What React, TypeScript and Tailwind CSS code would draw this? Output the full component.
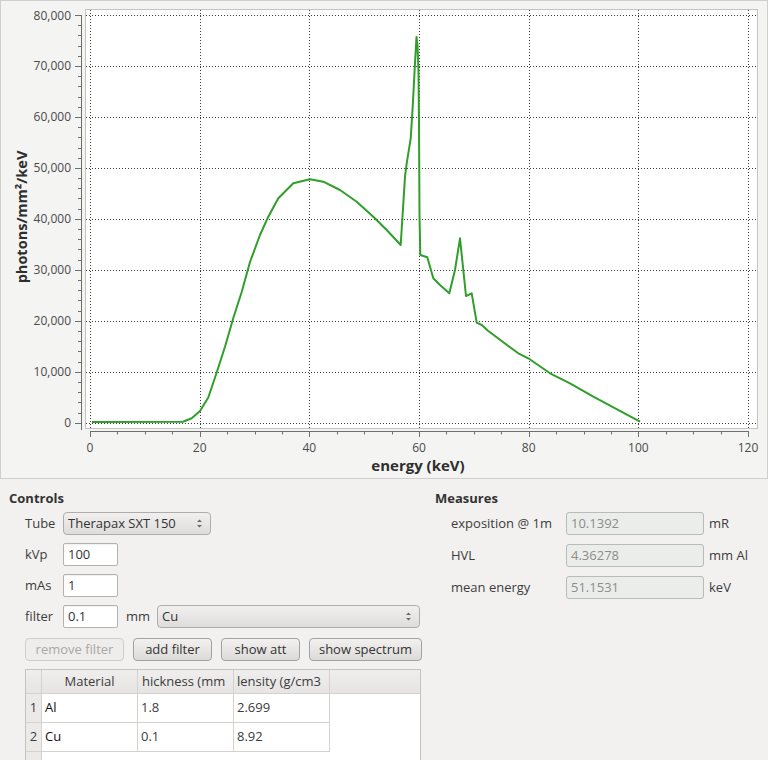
import React from "react";

const font = { fontFamily: '"Open Sans", "Noto Sans", sans-serif' };

const X0 = 90;
const XS = (748 - 90) / 120;
const Y0 = 422.7;
const YS = (422.7 - 15) / 80000;
const xp = (e: number) => X0 + e * XS;
const yp = (v: number) => Y0 - v * YS;

const curve: [number, number][] = [
  [92, 422], [183, 421.7], [191.7, 418.3], [200, 411], [208.3, 397.5], [216.7, 372.5], [225, 346.7],
  [233.3, 318], [241.7, 292], [250, 262], [260, 235], [268.3, 216.7], [278.3, 198.3], [293.3, 183.3],
  [310, 179.3], [323.3, 181.7], [340, 190], [356.7, 201.7], [373.3, 216.7], [386.7, 230], [400.7, 245],
  [405, 176.7], [406.7, 163.3], [410.7, 138.3], [412.7, 106.7], [414, 82], [415, 63.3], [416.5, 37],
  [417.5, 45], [418.5, 72], [419, 125], [419.5, 215], [420.3, 255], [427.3, 257.3], [433.3, 278.3],
  [440, 285], [449.3, 293.3], [455, 270], [460, 238.3], [466, 296], [471.7, 293.3], [476.7, 322.7],
  [481.7, 325], [488.3, 331], [518.3, 353.3], [528.3, 358.3], [550, 373.3], [570, 383.3], [593.3, 396.7],
  [640, 421.7],
];

function Chart() {
  const yMajor = [0, 10000, 20000, 30000, 40000, 50000, 60000, 70000, 80000];
  const yMinor: number[] = [];
  for (let v = 0; v <= 80000; v += 2000) if (v % 10000 !== 0) yMinor.push(v);
  const xMajor = [0, 20, 40, 60, 80, 100, 120];
  const xMinor: number[] = [];
  for (let e = 0; e <= 120; e += 5) if (e % 20 !== 0) xMinor.push(e);
  const r = (n: number) => Math.round(n) + 0.5;
  return (
    <svg width={766} height={477} viewBox="1 1 766 477" className="block" style={font}>
      <rect x={85.5} y={9.5} width={672} height={419} fill="#ffffff" stroke="#c4c4c4" />
      {yMajor.map((v) => (
        <line key={"gy" + v} x1={86} x2={757} y1={r(yp(v))} y2={r(yp(v))} stroke="#3a3a3a" strokeDasharray="1 2" />
      ))}
      {xMajor.map((e) => (
        <line key={"gx" + e} x1={r(xp(e))} x2={r(xp(e))} y1={10} y2={428} stroke="#3a3a3a" strokeDasharray="1 2" />
      ))}
      {/* y axis */}
      <line x1={81.5} x2={81.5} y1={15} y2={430} stroke="#6e6e6e" />
      {yMajor.map((v) => (
        <line key={"ty" + v} x1={75} x2={81} y1={r(yp(v))} y2={r(yp(v))} stroke="#6e6e6e" />
      ))}
      {yMinor.map((v) => (
        <line key={"my" + v} x1={78} x2={81} y1={r(yp(v))} y2={r(yp(v))} stroke="#6e6e6e" />
      ))}
      {yMajor.map((v) => (
        <text key={"ly" + v} x={71} y={yp(v) + 4.5} textAnchor="end" fontSize={12} fill="#4a4a4a">
          {v.toLocaleString("en-US")}
        </text>
      ))}
      {/* x axis */}
      <line x1={90} x2={748.5} y1={431.5} y2={431.5} stroke="#6e6e6e" />
      {xMajor.map((e) => (
        <line key={"tx" + e} x1={r(xp(e))} x2={r(xp(e))} y1={431} y2={437} stroke="#6e6e6e" />
      ))}
      {xMinor.map((e) => (
        <line key={"mx" + e} x1={r(xp(e))} x2={r(xp(e))} y1={431} y2={434.5} stroke="#6e6e6e" />
      ))}
      {xMajor.map((e) => (
        <text key={"lx" + e} x={xp(e)} y={451.5} textAnchor="middle" fontSize={12} fill="#4a4a4a">
          {e}
        </text>
      ))}
      <text x={418} y={471} textAnchor="middle" fontSize={15} fontWeight={700} fill="#2e2e2e">
        energy (keV)
      </text>
      <text
        x={0}
        y={0}
        transform="translate(26.5 217) rotate(-90)"
        textAnchor="middle"
        fontSize={14.5}
        fontWeight={700}
        fill="#2e2e2e"
      >
        photons/mm²/keV
      </text>
      <polyline
        points={curve.map(([a, b]) => `${a},${b}`).join(" ")}
        fill="none"
        stroke="#2f9f2a"
        strokeWidth={2}
        strokeLinejoin="round"
      />
    </svg>
  );
}

function Arrows() {
  return (
    <svg width="7" height="11" viewBox="0 0 7 11" className="shrink-0">
      <path d="M1 4 L3.5 1.5 L6 4 Z" fill="#6a6a6a" />
      <path d="M1 7 L3.5 9.5 L6 7 Z" fill="#6a6a6a" />
    </svg>
  );
}

function Combo({ text, w }: { text: string; w: string }) {
  return (
    <div
      className={`${w} h-[23px] flex items-center justify-between pl-[4px] pr-[7px] rounded-[4px] border border-[#aeadab] bg-gradient-to-b from-[#f1f0ef] to-[#dedddb] text-[13px] text-[#333]`}
    >
      <span>{text}</span>
      <Arrows />
    </div>
  );
}

function Input({ text }: { text: string }) {
  return (
    <div className="w-[55px] h-[23px] flex items-center pl-[4px] rounded-[2px] border border-[#b3b2b0] bg-white text-[13px] text-[#333] shadow-[inset_0_1px_1px_rgba(0,0,0,0.06)]">
      {text}
    </div>
  );
}

function Button({ text, w, disabled }: { text: string; w: string; disabled?: boolean }) {
  return (
    <div
      className={
        disabled
          ? `${w} h-[23px] flex items-center justify-center rounded-[4px] border border-[#cfcecc] bg-[#eeedec] text-[13px] text-[#a9a8a6]`
          : `${w} h-[23px] flex items-center justify-center rounded-[4px] border border-[#a3a2a0] bg-gradient-to-b from-[#f2f1f0] to-[#dcdbd9] text-[13px] text-[#333]`
      }
    >
      {text}
    </div>
  );
}

function Measure({ label, value, unit }: { label: string; value: string; unit: string }) {
  return (
    <div className="flex items-center h-[23px]">
      <div className="w-[115px] text-[13px] text-[#3c3c3c]">{label}</div>
      <div className="w-[138px] h-[23px] flex items-center pl-[4px] rounded-[3px] border border-[#b9bbb7] bg-[#ebedea] text-[13px] text-[#8c8c8a]">
        {value}
      </div>
      <div className="ml-[5px] text-[13px] text-[#3c3c3c]">{unit}</div>
    </div>
  );
}

function Table() {
  const rows = [
    ["1", "Al", "1.8", "2.699"],
    ["2", "Cu", "0.1", "8.92"],
  ];
  return (
    <div className="w-[396px] h-[110px] border border-[#c4c3c1] bg-white flex flex-col text-[13px]">
      <div className="flex h-[24px] bg-gradient-to-b from-[#efeeed] to-[#e6e5e4] border-b border-[#d3d2d0]">
        <div className="w-[16px] shrink-0 border-r border-[#d3d2d0]" />
        <div className="w-[96px] shrink-0 border-r border-[#d3d2d0] flex items-center justify-center text-[#3c3c3c]">Material</div>
        <div className="w-[96px] shrink-0 border-r border-[#d3d2d0] flex items-center pl-[4px] overflow-hidden whitespace-nowrap text-[#3c3c3c]">hickness (mm</div>
        <div className="w-[96px] shrink-0 border-r border-[#d3d2d0] flex items-center pl-[3px] overflow-hidden whitespace-nowrap text-[#3c3c3c]">lensity (g/cm3</div>
        <div className="flex-1" />
      </div>
      {rows.map((rw) => (
        <div key={rw[0]} className="flex h-[29px]">
          <div className="w-[16px] shrink-0 bg-[#ebeae9] border-r border-b border-[#d3d2d0] flex items-center justify-center text-[#3c3c3c]">{rw[0]}</div>
          <div className="w-[96px] shrink-0 border-r border-b border-[#d3d2d0] flex items-center pl-[3px] text-[#111]">{rw[1]}</div>
          <div className="w-[96px] shrink-0 border-r border-b border-[#d3d2d0] flex items-center pl-[3px] text-[#3c3c3c]">{rw[2]}</div>
          <div className="w-[96px] shrink-0 border-r border-b border-[#d3d2d0] flex items-center pl-[3px] text-[#3c3c3c]">{rw[3]}</div>
          <div className="flex-1" />
        </div>
      ))}
      <div className="flex flex-1">
        <div className="w-[16px] shrink-0 bg-[#ebeae9] border-r border-[#d3d2d0]" />
        <div className="flex-1" />
      </div>
    </div>
  );
}

export default function App() {
  return (
    <div className="w-[768px] h-[760px] overflow-hidden bg-[#f2f1f0] flex flex-col" style={font}>
      <div className="h-[479px] w-[768px] shrink-0 border border-[#d0cfcd] bg-[#f4f4f3]">
        <Chart />
      </div>
      <div className="flex flex-1">
        <div className="w-[426px] shrink-0 pl-[9px] pt-[10px] flex flex-col">
          <div className="text-[13px] leading-[18px] font-bold text-[#333]">Controls</div>
          <div className="mt-[5px] pl-[16px] flex flex-col gap-[8px]">
            <div className="flex items-center h-[23px]">
              <div className="w-[38px] text-[13px] text-[#3c3c3c]">Tube</div>
              <Combo text="Therapax SXT 150" w="w-[148px]" />
            </div>
            <div className="flex items-center h-[23px]">
              <div className="w-[38px] text-[13px] text-[#3c3c3c]">kVp</div>
              <Input text="100" />
            </div>
            <div className="flex items-center h-[23px]">
              <div className="w-[38px] text-[13px] text-[#3c3c3c]">mAs</div>
              <Input text="1" />
            </div>
            <div className="flex items-center h-[23px]">
              <div className="w-[38px] text-[13px] text-[#3c3c3c]">filter</div>
              <Input text="0.1" />
              <div className="w-[39px] pl-[8px] text-[13px] text-[#3c3c3c]">mm</div>
              <Combo text="Cu" w="w-[263px]" />
            </div>
            <div className="flex items-center gap-[9px] mt-[2px]">
              <Button text="remove filter" w="w-[99px]" disabled />
              <Button text="add filter" w="w-[79px]" />
              <Button text="show att" w="w-[79px]" />
              <Button text="show spectrum" w="w-[113px]" />
            </div>
            <Table />
          </div>
        </div>
        <div className="flex-1 pl-[9px] pt-[10px] flex flex-col">
          <div className="text-[13px] leading-[18px] font-bold text-[#333]">Measures</div>
          <div className="mt-[5px] pl-[16px] flex flex-col gap-[9px]">
            <Measure label="exposition @ 1m" value="10.1392" unit="mR" />
            <Measure label="HVL" value="4.36278" unit="mm Al" />
            <Measure label="mean energy" value="51.1531" unit="keV" />
          </div>
        </div>
      </div>
    </div>
  );
}
